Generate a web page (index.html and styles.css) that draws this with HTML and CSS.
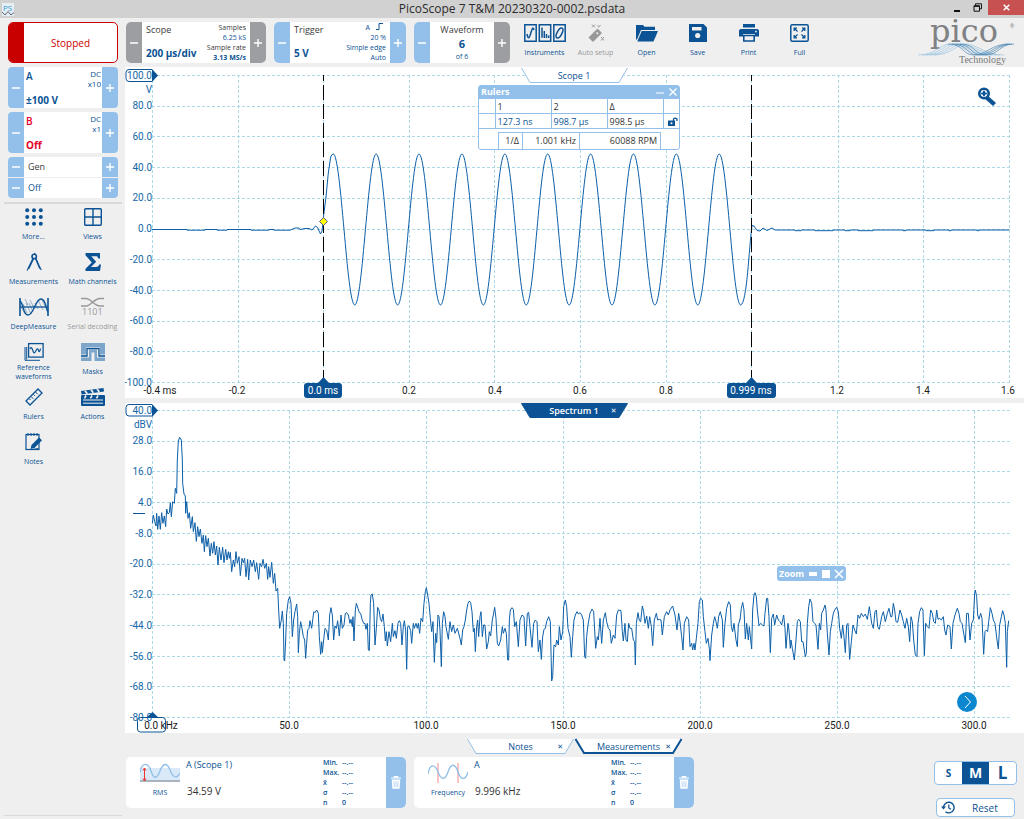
FILE: index.html
```html
<!DOCTYPE html>
<html lang="en">
<head>
<meta charset="utf-8">
<title>PicoScope 7 T&amp;M 20230320-0002.psdata</title>
<meta name="viewport" content="width=device-width, initial-scale=1">
<link rel="stylesheet" href="styles.css">
</head>
<body>
<svg class="defs" aria-hidden="true">
  <symbol id="plus" viewBox="0 0 8 8"><path d="M4 0v8M0 4h8" fill="none" stroke="#fff" stroke-width="1.4"/></symbol>
  <symbol id="minus" viewBox="0 0 8 8"><path d="M0 4h8" fill="none" stroke="#fff" stroke-width="1.4"/></symbol>
  <symbol id="trash" viewBox="0 0 10 13"><path d="M0 2h10M3.3 2V.6h3.4V2" fill="none" stroke="#fff" stroke-width="1.2"/><path d="M.8 3.6h8.4l-.6 9.2H1.4z" fill="#fff"/><path d="M3 5.2l.3 6M5 5.2v6M7 5.2l-.3 6" stroke="#8fbfe9" stroke-width=".6"/></symbol>
</svg>

<header class="titlebar">
  <svg class="app-icon" width="12" height="13" viewBox="0 0 12 13"><rect width="12" height="13" fill="#e6eef4"/><text x="1" y="8" font-size="8" fill="#2f9bd8">PS</text><path d="M0 9l3 3 3-3.500 3 3.500 3-2.500" fill="none" stroke="#567" stroke-width="1"/></svg>
  <h1 class="title">PicoScope 7 T&amp;M 20230320-0002.psdata</h1>
  <div class="window-buttons">
    <button class="win" aria-label="Minimise"><svg width="8" height="8" viewBox="0 0 8 8"><path d="M1 7h6" stroke="#111" stroke-width="2"/></svg></button>
    <button class="win" aria-label="Restore"><svg width="9" height="9" viewBox="0 0 9 9"><path d="M2.500 2V.8h6v5H7M1 2.700h5.500v5.500H1zM1 3.400h5.500" fill="none" stroke="#111"/></svg></button>
    <button class="win win-close" aria-label="Close"><svg width="7" height="7" viewBox="0 0 7 7"><path d="M.7.7l5.600 5.600M6.300.7L.7 6.300" stroke="#fff" stroke-width="1.500"/></svg></button>
  </div>
</header>

<div class="app">
  <aside class="sidebar">
    <button class="run-state"><span class="run-bar"></span><span class="run-text">Stopped</span></button>

    <section class="channel">
      <button class="step" aria-label="Channel A range down"><svg class="sign"><use href="#minus"/></svg></button>
      <div class="channel-body ink">
        <span class="channel-name">A</span><span class="channel-mode">DC<br>x10</span>
        <strong class="channel-range">±100 V</strong>
      </div>
      <button class="step" aria-label="Channel A range up"><svg class="sign"><use href="#plus"/></svg></button>
    </section>
    <section class="channel">
      <button class="step" aria-label="Channel B range down"><svg class="sign"><use href="#minus"/></svg></button>
      <div class="channel-body channel-b">
        <span class="channel-name">B</span><span class="channel-mode">DC<br>x1</span>
        <strong class="channel-range">Off</strong>
      </div>
      <button class="step" aria-label="Channel B range up"><svg class="sign"><use href="#plus"/></svg></button>
    </section>
    <section class="generator">
      <div class="gen-row"><button class="step" aria-label="Generator previous"><svg class="sign"><use href="#minus"/></svg></button><span class="gen-text gray">Gen</span><button class="step" aria-label="Generator next"><svg class="sign"><use href="#plus"/></svg></button></div>
      <div class="gen-row"><button class="step" aria-label="Output down"><svg class="sign"><use href="#minus"/></svg></button><span class="gen-text">Off</span><button class="step" aria-label="Output up"><svg class="sign"><use href="#plus"/></svg></button></div>
    </section>

    <nav class="tools">
      <button class="tool"><svg width="18" height="18" viewBox="0 0 18 18" fill="#0b5394"><circle cx="2.200" cy="2.200" r="2"/><circle cx="9" cy="2.200" r="2"/><circle cx="15.800" cy="2.200" r="2"/><circle cx="2.200" cy="9" r="2"/><circle cx="9" cy="9" r="2"/><circle cx="15.800" cy="9" r="2"/><circle cx="2.200" cy="15.800" r="2"/><circle cx="9" cy="15.800" r="2"/><circle cx="15.800" cy="15.800" r="2"/></svg><span>More...</span></button>
      <button class="tool"><svg width="18" height="18" viewBox="0 0 18 18" fill="none" stroke="#0b5394" stroke-width="1.400"><rect x=".7" y=".7" width="16.600" height="16.600" rx="1"/><path d="M9 1v16M1 9h16"/></svg><span>Views</span></button>
      <button class="tool"><svg width="18" height="18" viewBox="0 0 18 18" fill="none" stroke="#0b5394"><path d="M8.500 5L3.500 15.500M10.500 5L15 15.500" stroke-width="1.800"/><circle cx="9.200" cy="3.500" r="2.200" stroke-width="1.600"/><path d="M4 14l-2 3.500M14.800 14.500l1.500 2.500M9.500 0l.7 1.500" stroke-width="1.200"/></svg><span>Measurements</span></button>
      <button class="tool"><svg width="18" height="18" viewBox="0 0 18 18"><path d="M1.500 0h14.500v5.500h-1.800c-.3-1.700-.9-2.200-2.500-2.200H7.300L12.200 8.700 7 14h5c1.700 0 2.500-.5 3.200-2.400h1.800L16 18H1.500v-2.200L7.800 9.400 1.500 2.200z" fill="#0b5394"/></svg><span>Math channels</span></button>
      <button class="tool"><svg width="30" height="20" viewBox="0 0 30 20" fill="none" stroke="#0b5394"><path d="M1 1v18M29 1v18" stroke-width="1.600"/><path d="M1 10h28" stroke-width="1.300"/><path d="M4 7l4 9M7 6l5 11M10 6l4 9M14 8l2 4M16 6l3 6M19 3l5 10M23 3l4 8M25 3l3 6M2 10l4 7M2 4l3 6M11 3l3 6M6 2l3 6" stroke-width=".5" opacity=".8"/><path d="M1 4c4 4 3 14 8 14 6 0 7-16 13-16 5 0 4 9 7 13" stroke-width="1.300"/></svg><span>DeepMeasure</span></button>
      <button class="tool muted"><svg class="spill" width="24" height="20" viewBox="0 0 24 20" fill="none" stroke="#999"><path d="M0 1.500h5c5 0 8 7.500 14 7.500h4M0 9h5c5 0 8-7.500 14-7.500h4" stroke-width="1.500"/><text x="1" y="18" font-size="9" fill="#999" stroke="none">1101</text></svg><span>Serial decoding</span></button>
      <button class="tool"><svg width="20" height="18" viewBox="0 0 20 18" fill="none" stroke="#0b5394"><rect x="4.600" y=".6" width="14.500" height="13.500" stroke-width="1.300"/><path d="M1 4v13.300h15M2.700 16.500V4" stroke-width="1"/><path d="M6 6c1-3 2-1 3 2s2 2 3-.5 2-2 2.500 0 1.500 1 2-2" stroke-width="1.200"/></svg><span>Reference waveforms</span></button>
      <button class="tool"><svg width="24" height="18" viewBox="0 0 24 18"><path d="M0 0h24v11.500h-5V4.500H5v7H0z" fill="#7ea6cb"/><path d="M0 14.500h8v-8h8v8h8V18H0z" fill="#7ea6cb"/><path d="M0 13h6V5.600h12V13h6" fill="none" stroke="#0b5394" stroke-width="1.300"/><path d="M10.500 18V9.500h3V18z" fill="#efefef"/></svg><span>Masks</span></button>
      <button class="tool"><svg width="18" height="18" viewBox="0 0 18 18" fill="none" stroke="#0b5394" stroke-width="1.300"><path d="M1 13L13 1l4 4L5 17z"/><path d="M4 10.500l1.500 1.500M6 8.500L8.300 10.800M8.300 6.300l1.500 1.500M10.500 4l2.300 2.300" stroke-width="1"/></svg><span>Rulers</span></button>
      <button class="tool"><svg width="24" height="18" viewBox="0 0 24 18"><path d="M0 3L22.500 0l.5 3.600L.5 6.600z" fill="#0b5394"/><rect y="7" width="24" height="11" rx="1" fill="#0b5394"/><path d="M4 2.700l2.300 3M10 1.800l2.300 3M16 1l2.300 3" stroke="#efefef" stroke-width="1.800"/><path d="M2 12h20M2 15.200h20" stroke="#efefef" stroke-width="1"/><path d="M5 7.500l-1.500 2.800M11 7.500l-1.500 2.800M17 7.500l-1.500 2.800" stroke="#efefef" stroke-width="1.600"/></svg><span>Actions</span></button>
      <button class="tool"><svg width="18" height="18" viewBox="0 0 18 18"><rect x="1" y="1.500" width="13" height="15" fill="none" stroke="#0b5394" stroke-width="1.200"/><path d="M3 0v3M6 0v3M9 0v3M12 0v3" stroke="#0b5394" stroke-width="1"/><path d="M5.500 16l1-4 7.500-7.500 3 2.700-7.500 7.800z" fill="#0b5394"/><path d="M7.500 16.500l6-1" stroke="#0b5394"/></svg><span>Notes</span></button>
    </nav>
  </aside>

  <main class="main">
    <div class="toolbar">
      <section class="setting setting-scope">
        <button class="step step-gray" aria-label="Shorter timebase"><svg class="sign"><use href="#minus"/></svg></button>
        <div class="setting-body">
          <div class="setting-left"><span class="gray">Scope</span><strong>200 µs/div</strong></div>
          <div class="setting-right"><span class="gray">Samples</span><span>6.25 kS</span><span class="gray">Sample rate</span><b>3.13 MS/s</b></div>
        </div>
        <button class="step step-gray" aria-label="Longer timebase"><svg class="sign"><use href="#plus"/></svg></button>
      </section>
      <section class="setting setting-trigger">
        <button class="step" aria-label="Trigger level down"><svg class="sign"><use href="#minus"/></svg></button>
        <div class="setting-body">
          <div class="setting-left"><span class="gray">Trigger</span><strong>5 V</strong></div>
          <div class="setting-right"><span class="edge">A <svg width="8" height="7" viewBox="0 0 8 7"><path d="M0 6.500h3v-6h4" fill="none" stroke="#0b5394"/></svg></span><span>20 %</span><span>Simple edge</span><span>Auto</span></div>
        </div>
        <button class="step" aria-label="Trigger level up"><svg class="sign"><use href="#plus"/></svg></button>
      </section>
      <section class="setting setting-wave">
        <button class="step" aria-label="Previous waveform"><svg class="sign"><use href="#minus"/></svg></button>
        <div class="setting-body wave-body"><span class="gray">Waveform</span><strong>6</strong><small>of 6</small></div>
        <button class="step step-gray" aria-label="Next waveform"><svg class="sign"><use href="#plus"/></svg></button>
      </section>
      <nav class="actions">
        <button class="action"><svg width="42" height="18" viewBox="0 0 42 18" fill="none" stroke="#0b5394"><path d="M.8.8h11.400v16.400H.8zM15.300.8h11.400v16.400H15.300zM29.800.8h11.400v16.400H29.800z" stroke-width="1.500"/><path d="M3 10c1 5 2 5 3.500 0s2.500-8 3.500-4M18 3.500v10.300M20.300 7v7M22.500 10v4M24.700 11.500V14" stroke-width="1.500"/><ellipse cx="35.500" cy="9" rx="2.400" ry="5.500" transform="rotate(28 35.500 9)" stroke-width="1.500"/></svg><span>Instruments</span></button>
        <button class="action muted"><svg width="18" height="18" viewBox="0 0 18 18"><path d="M2.500 13.500l8-8 3.500 3.500-8 8z" fill="#999" stroke="#999" stroke-width="1.500" stroke-linejoin="round"/><path d="M9.500 8.500l1.500 1.500" stroke="#efefef" stroke-width="1.600"/><path d="M5 .5l3 3M8 .5l-3 3M14 13l3 3.500M17 13l-3 3.500M13.500 1l-2 2.500M10.500 1l1 1.500" stroke="#999" stroke-width="1"/></svg><span>Auto setup</span></button>
        <button class="action"><svg width="22" height="18" viewBox="0 0 22 18" fill="#0b5394"><path d="M0 1h7l1.500 1.800H19V6H5L1 15.500H0z"/><path d="M5.700 7H22l-4.500 10.500H1.300z"/></svg><span>Open</span></button>
        <button class="action"><svg width="18" height="18" viewBox="0 0 18 18"><path d="M0 0h14.500L18 3.500V18H0z" fill="#0b5394"/><path d="M3 3h9.500v3.500H3z" fill="#efefef"/><circle cx="8.700" cy="11.500" r="2.600" fill="#efefef"/></svg><span>Save</span></button>
        <button class="action"><svg width="20" height="18" viewBox="0 0 20 18" fill="#0b5394"><path d="M4 0h12v3.500H4zM2 5h16c1.500 0 2 1 2 2v5.500h-4V10H4v2.500H0V7c0-1 .5-2 2-2z"/><path d="M4.800 11.500h10.400V17H4.800z" fill="#efefef" stroke="#0b5394" stroke-width="1.600"/><circle cx="17" cy="7.500" r=".9" fill="#efefef"/></svg><span>Print</span></button>
        <button class="action"><svg width="19" height="18" viewBox="0 0 19 18" fill="none" stroke="#0b5394"><rect x=".8" y=".8" width="17.400" height="16.400" rx="1.500" stroke-width="1.500"/><path d="M4.200 7V4.200H7M4.500 4.500l3 3M12 4.200h2.800V7M14.500 4.500l-3 3M4.200 11v2.800H7M4.500 13.500l3-3M14.800 11v2.800H12M14.500 13.500l-3-3" stroke-width="1.300"/></svg><span>Full</span></button>
      </nav>
      <svg class="logo" width="98" height="46" viewBox="0 0 98 46" role="img" aria-label="pico Technology">
        <text x="12" y="20" font-family="DejaVu Serif, serif" font-size="32" fill="#808184">pico</text>
        <g fill="none" stroke="#9cc4e0" stroke-width=".7">
          <path d="M0 33c18 0 22-11 32-11s20 11 38 11M4 33c18 0 22-11 32-11s20 11 38 11M8 33c18 0 22-11 32-11s20 11 38 11M12 33c18 0 22-11 32-11s20 11 38 11M16 33c18 0 22-11 32-11s20 11 38 11"/>
          <path d="M30 22c16 0 14 11 26 11s18-11 34-11M34 22c16 0 14 11 26 11s18-11 32-11M38 22c16 0 14 11 26 11s16-11 30-11M42 22c16 0 14 11 26 11s14-11 28-11" stroke="#4f87b2"/>
        </g>
        <text x="41" y="41" font-family="Liberation Serif, serif" font-size="10" fill="#77787b">Technology</text>
        <text x="92" y="6" font-size="5" fill="#77787b">®</text>
      </svg>
    </div>

    <section class="plot" aria-label="Scope 1">
      <svg class="chart" viewBox="0 0 899 331">
        <g class="grid">
          <path d="M27 8.500H885M27 39.500H885M27 69.500H885M27 100.500H885M27 131.500H885M27 162.500H885M27 192.500H885M27 223.500H885M27 254.500H885M27 284.500H885M27 315.500H885"/>
          <path d="M27.500 8V315M113.500 8V315M198.500 8V315M284.500 8V315M369.500 8V315M455.500 8V315M541.500 8V315M626.500 8V315M713.500 8V315M798.500 8V315M884.500 8V315"/>
        </g>
        <g class="y-labels">
          <text x="27" y="12">100.0</text><text x="27" y="26">V</text><text x="27" y="42">80.0</text><text x="27" y="73">60.0</text><text x="27" y="104">40.0</text><text x="27" y="134">20.0</text><text x="27" y="165">0.0</text><text x="27" y="196">-20.0</text><text x="27" y="227">-40.0</text><text x="27" y="257">-60.0</text><text x="27" y="288">-80.0</text><text x="27" y="319">-100.0</text>
        </g>
        <g class="x-labels">
          <text x="35" y="327">-0.4 ms</text><text x="112" y="327">-0.2</text><text x="284" y="327">0.2</text><text x="370" y="327">0.4</text><text x="455" y="327">0.6</text><text x="541" y="327">0.8</text><text x="712" y="327">1.2</text><text x="798" y="327">1.4</text><text x="883" y="327">1.6</text>
        </g>
        <path class="marker-box" d="M27 2.500H4q-3 0-3 3v6q0 3 3 3H27"/><path class="marker" d="M27 2v13l6-6.500z"/>
        <path class="trace" d="M27 162.500H62v.7h18v-.7h12v.7h10v-.7h24v.7h18v-.7h5v.7h16L170 161h4l1 1.500 5-1h4l3 1.500L190.500 159l2 1.500 3 6.500 1.500-3L198.700 148 201 130 203.300 106 205.700 90Q206.700 87 208.300 87
          c7.800 0 13.600 151 21.440 151c7.800 0 13.600-151 21.440-151c7.800 0 13.600 151 21.440 151c7.800 0 13.600-151 21.440-151c7.800 0 13.600 151 21.440 151c7.800 0 13.600-151 21.440-151c7.800 0 13.600 151 21.440 151c7.800 0 13.600-151 21.440-151c7.800 0 13.600 151 21.440 151c7.800 0 13.600-151 21.440-151c7.800 0 13.600 151 21.440 151c7.800 0 13.600-151 21.440-151c7.800 0 13.600 151 21.440 151c7.800 0 13.600-151 21.440-151c7.800 0 13.600 151 21.440 151c7.800 0 13.600-151 21.440-151c7.800 0 13.600 151 21.440 151c7.800 0 13.600-151 21.440-151c7.800 0 13.600 151 21.440 151
          C622 237 624 180 627 158.500l2 .5 3 4.500 3 .5 3-3 4 2.500 5-2.500 3 2h20v.7h6v-.7h14v.7h18v-.7h12v.7h5v-.7h8v.7h15v-.7h30v.7h3v-.7h20v.7h8v-.7h15v.7h2v-.7h26v.7h2v-.7H884"/>
        <path class="ruler" d="M198.500 8V311M626.500 8V311"/>
        <path d="M198.500 150.500l4 4-4 4-4-4z" fill="#ff0" stroke="#5a5a8c"/>
        <g class="ruler-tag">
          <path d="M193 316l5.500-6 5.500 6h10q3 0 3 3v9q0 3-3 3h-32q-3 0-3-3v-9q0-3 3-3z"/><text x="198" y="327">0.0 ms</text>
          <path d="M621 316l5.500-6 5.500 6h16q3 0 3 3v9q0 3-3 3h-43q-3 0-3-3v-9q0-3 3-3z"/><text x="626" y="327">0.999 ms</text>
        </g>
      </svg>
      <button class="tab tab-over tab-light"><svg class="tab-shape" viewBox="0 0 107 15" preserveAspectRatio="none"><path d="M.5 0L9 14.500h89L106.500 0"/></svg><span class="tab-name">Scope 1</span></button>
      <div class="rulers">
        <div class="rulers-head"><strong>Rulers</strong><button class="mini" aria-label="Minimise rulers"><svg width="8" height="8" viewBox="0 0 8 8"><path d="M0 5h8" stroke="#fff"/></svg></button><button class="mini" aria-label="Close rulers"><svg width="8" height="8" viewBox="0 0 8 8"><path d="M.5.5l7 7M7.500.5l-7 7" stroke="#fff" stroke-width="1.400"/></svg></button></div>
        <table class="rulers-table">
          <tr><td class="slim"></td><th>1</th><th>2</th><th>Δ</th><td class="slim"></td></tr>
          <tr><td></td><td class="ink">127.3 ns</td><td class="ink">998.7 µs</td><td>998.5 µs</td><td class="lock"><svg width="10" height="9" viewBox="0 0 10 9"><rect y="3.500" width="7" height="5.500" fill="#0b5394"/><path d="M5.500 4V2q1.700-1.800 3.500 0v2" fill="none" stroke="#0b5394" stroke-width="1.200"/><circle cx="3.500" cy="6.200" r="1" fill="#fff"/></svg></td></tr>
        </table>
        <table class="rate-table"><tr><th class="inverse">1/Δ</th><td class="rate">1.001 kHz</td><td class="rpm">60088 RPM</td></tr></table>
      </div>
      <button class="zoom-in" aria-label="Zoom in"><svg width="20" height="20" viewBox="0 0 20 20"><path d="M10 8l9 8-3 3-9-8z" fill="#0b5394"/><circle cx="7" cy="6.500" r="4.700" fill="#fff" stroke="#0b5394" stroke-width="2.600"/><path d="M7 3.700v5.600M4.200 6.500h5.600" stroke="#0b5394" stroke-width="1.900"/></svg></button>
    </section>

    <section class="plot" aria-label="Spectrum 1">
      <svg class="chart" viewBox="0 0 899 330">
        <g class="grid">
          <path d="M27 7.500H885M27 38.500H885M27 68.500H885M27 99.500H885M27 130.500H885M27 161.500H885M27 191.500H885M27 222.500H885M27 253.500H885M27 283.500H885M27 314.500H885"/>
          <path d="M27.500 8V315M164.500 8V315M301.500 8V315M438.500 8V315M575.500 8V315M712.500 8V315M849.500 8V315"/>
        </g>
        <g class="y-labels">
          <text x="27" y="11">40.0</text><text x="27" y="25">dBV</text><text x="27" y="41">28.0</text><text x="27" y="72">16.0</text><text x="27" y="103">4.0</text><text x="27" y="134">-8.0</text><text x="27" y="164">-20.0</text><text x="27" y="195">-32.0</text><text x="27" y="226">-44.0</text><text x="27" y="257">-56.0</text><text x="27" y="287">-68.0</text><text x="27" y="318">-80.0</text>
        </g>
        <g class="x-labels">
          <text x="36" y="326">0.0 kHz</text><text x="164" y="326">50.0</text><text x="301" y="326">100.0</text><text x="438" y="326">150.0</text><text x="575" y="326">200.0</text><text x="712" y="326">250.0</text><text x="849" y="326">300.0</text>
        </g>
        <path class="marker-box" d="M27 1.500H4q-3 0-3 3v5.500q0 3 3 3H27M15.500 314.500h22q3 0 3 3v8.500q0 3-3 3h-22q-3 0-3-3v-8.500q0-3 3-3zM8 110.500h12"/><path class="marker" d="M27 1v13l6-6.500zM21 315h13l-6.500-6z"/>
        <g transform="translate(-5 157) scale(.33333)">
          <polyline class="trace" points="97,-110 100,-135 104,-115 108,-102 110,-140 113,-92 117,-132 121,-92 125,-142 129,-110 133,-132 137,-100 140,-153 144,-138 148,-142 151,-172 154,-130 158,-175 163,-170 166,-215 170,-200 172,-300 175,-357 179,-368 184,-360 187,-300 188,-230 192,-198 196,-192 197,-140 200,-175 204,-125 208,-142 212,-95 217,-130 220,-85 225,-112 229,-56 233,-100 237,-70 241,-93 246,-50 250,-75 253,-25 257,-73 261,-40 265,-65 270,-12 274,-50 278,-20 282,-55 286,-15 290,-42 294,15 298,-38 303,0 308,-38 312,8 317,-32 321,0 325,-25 328,-5 331,-23 335,35 340,0 344,20 348,-25 352,10 357,-10 361,47 366,-5 370,8 374,-5 378,50 383,-2 386,60 391,0 396,20 401,0 406,35 410,8 416,58 420,10 425,20 429,-2 434,25 439,10 443,58 446,20 450,52 455,7 460,70 464,40 468,93 473,85 476,150 479,205 484,180 487,153 490,190 492,300 494,303 497,240 500,160 505,120 509,110 513,130 517,230 521,180 525,155 530,132 533,170 535,278 538,220 542,185 546,205 550,230 554,240 557,295 560,250 563,210 567,205 570,182 575,205 580,165 582,155 585,158 590,150 595,160 598,230 602,283 605,245 607,278 611,240 615,205 620,210 625,240 629,165 633,143 637,165 641,240 645,198 649,205 653,182 658,228 663,165 667,205 672,195 676,160 680,158 685,165 690,190 693,178 697,200 699,170 702,243 706,150 709,130 714,145 718,158 722,160 726,178 731,190 735,190 738,208 742,190 745,270 748,272 751,130 753,105 757,102 761,130 765,255 769,205 773,142 777,150 781,175 785,185 789,162 793,200 796,243 799,215 802,258 807,215 812,245 817,190 820,230 825,212 829,235 834,190 838,182 842,190 846,255 850,200 853,182 857,210 860,328 863,200 867,198 872,212 875,250 880,190 883,205 888,190 892,205 895,190 899,220 903,175 908,185 912,130 916,95 919,83 923,105 927,130 931,175 935,215 939,185 943,307 947,220 950,248 954,165 957,170 960,210 964,320 967,190 971,155 975,170 978,200 985,238 990,185 995,215 1000,195 1005,220 1012,205 1020,235"/>
        </g>
        <g transform="translate(315 157) scale(.33333)">
          <polyline class="trace" points="60,235 64,255 68,210 72,200 76,180 80,150 84,130 88,123 92,128 96,155 100,215 103,205 106,275 110,200 113,180 116,230 120,170 123,155 127,230 131,195 135,195 140,267 145,245 148,215 152,228 157,180 160,165 164,142 168,175 172,250 176,258 182,240 187,200 190,220 195,205 199,220 203,300 206,300 208,180 211,150 216,143 220,148 224,200 229,185 235,260 240,180 246,165 252,170 257,258 262,160 266,157 270,200 276,262 281,190 286,180 291,185 295,275 300,240 304,298 308,230 312,208 316,205 320,185 326,170 331,185 335,363 338,350 342,255 347,260 350,240 355,255 358,200 363,240 368,215 371,140 376,120 380,140 384,205 390,230 394,292 398,230 402,180 406,165 411,155 415,162 420,158 425,165 430,180 434,290 437,295 440,230 444,195 450,160 456,147 461,155 464,210 467,265 472,230 475,240 480,175 485,250 490,180 496,158 500,185 505,205 510,210 514,250 520,225 525,235 530,165 535,150 543,152 547,215 550,243 555,190 558,240 562,245 566,190 570,205 575,205 580,240 584,245 586,315 589,190 594,158 598,182 602,185 607,138 611,155 615,190 620,168 625,205 629,170 634,200 638,257 643,180 649,160 653,180 658,178 663,180 667,225 673,170 680,155 685,165 690,150 698,138 705,165 711,210 716,160 720,185 725,230 729,270 733,190 740,170 746,180 750,260 755,250 758,270 762,250 765,270 769,235 774,190 778,125 782,115 787,120 790,170 795,215 799,250 804,235 808,265 810,302 815,225 820,190 824,170 828,185 832,205 836,170 841,155 847,180 850,262 855,190 860,145 866,125 871,135 874,200 878,215 882,190 888,240 892,260 895,195 900,178"/>
        </g>
        <g transform="translate(605 157) scale(.33333)">
          <polyline class="trace" points="30,180 34,145 38,127 42,150 46,237 50,190 55,240 58,200 62,240 65,267 68,150 72,105 75,98 79,110 82,150 87,197 92,190 97,195 102,198 105,160 110,115 113,115 117,170 121,278 125,175 130,162 134,195 140,165 145,180 150,185 155,195 161,165 165,205 168,265 174,190 177,210 181,265 183,240 187,265 193,300 198,240 202,185 206,178 211,185 215,245 219,245 226,290 229,280 232,190 236,140 240,117 245,130 249,185 254,190 258,195 264,268 268,190 272,210 275,160 280,150 285,135 288,150 292,220 297,285 301,215 305,190 310,160 314,150 320,142 325,155 329,205 334,235 338,195 342,230 346,278 350,195 354,190 359,298 364,245 369,195 374,210 379,222 384,165 389,175 394,160 400,170 406,162 412,178 418,140 421,160 425,190 430,205 435,155 439,150 443,200 448,208 455,170 460,155 466,185 472,160 477,145 482,170 486,170 490,130 494,150 498,185 503,187 510,150 515,165 520,185 525,205 530,175 535,200 539,245 543,170 547,185 551,240 556,285 561,290 564,190 569,155 574,143 579,150 583,287 587,190 592,200 597,205 602,150 607,160 611,185 616,190 620,150 624,178 629,175 634,180 640,170 644,210 648,225 653,195 660,200 664,267 669,190 675,165 682,145 687,160 691,185 696,190 702,225 706,248 710,160 715,160 720,240 725,190 730,180 734,100 736,90 740,110 743,165 747,178 752,160 756,175 761,283 765,215 769,210 773,215 776,185 781,143 786,160 790,180 795,190 801,240 805,267 809,195 814,170 818,152 822,165 826,190 830,322 832,215 836,182"/>
        </g>
      </svg>
      <button class="tab tab-over tab-solid"><svg class="tab-shape" viewBox="0 0 107 15" preserveAspectRatio="none"><path d="M.5.5L9 14.500h89L106.500.5z"/></svg><span class="tab-name">Spectrum 1</span><span class="tab-x">✕</span></button>
      <div class="zoom-bar"><strong>Zoom</strong><svg width="38" height="10" viewBox="0 0 38 10"><path d="M1 3h8v4H1zM14 1h8v8h-8z" fill="#fff"/><path d="M27 1l8 8M35 1l-8 8" stroke="#fff" stroke-width="1.600"/></svg></div>
      <button class="next" aria-label="Next"><svg width="20" height="20" viewBox="0 0 20 20"><circle cx="10" cy="10" r="10" fill="#0b87d0"/><path d="M8 4l5.500 6L8 16" fill="none" stroke="#fff"/></svg></button>
    </section>

    <div class="dock">
      <div class="dock-tabs">
        <button class="tab tab-light"><svg class="tab-shape" viewBox="0 0 107 15" preserveAspectRatio="none"><path d="M.5 0L9 14.500h89L106.500 0"/></svg><span class="tab-name">Notes</span><span class="tab-x">✕</span></button>
        <button class="tab tab-active"><svg class="tab-shape" viewBox="0 0 107 15" preserveAspectRatio="none"><path d="M.5 0L9 14h89L106.500 0"/></svg><span class="tab-name">Measurements</span><span class="tab-x">✕</span></button>
      </div>
      <div class="dock-body">
        <article class="card">
          <div class="card-kind"><svg width="40" height="20" viewBox="0 0 40 20"><path d="M0 5h40v12H0z" fill="#d9e9f8"/><path d="M0 18h40" stroke="#aab4be" stroke-width="2"/><path d="M0 9C2-1 8-1 11 8s6 8 9 0 7-9 10-1 7 9 10 3" fill="none" stroke="#8fbfe9" stroke-width="1.300"/><path d="M4.500 6v11M3 7.500L4.500 5 6 7.500M3 15.500L4.500 18 6 15.500" fill="none" stroke="#e33"/></svg><span>RMS</span></div>
          <div class="card-main"><span>A (Scope 1)</span><span class="value">34.59 V</span></div>
          <dl class="stats"><dt>Min.</dt><dd>--.--</dd><dt>Max.</dt><dd>--.--</dd><dt>x̄</dt><dd>--.--</dd><dt>σ</dt><dd>--.--</dd><dt>n</dt><dd>0</dd></dl>
          <button class="bin" aria-label="Delete RMS"><svg width="10" height="13"><use href="#trash"/></svg></button>
        </article>
        <article class="card">
          <div class="card-kind"><svg width="40" height="20" viewBox="0 0 40 20"><path d="M10 0v20M30 0v20" stroke="#f8c4c4" stroke-width="2"/><path d="M0 11C2 0 7 1 10 9s7 9 10 0 7-9 10 0 8 8 10 0" fill="none" stroke="#8fbfe9" stroke-width="1.300"/></svg><span>Frequency</span></div>
          <div class="card-main"><span>A</span><span class="value">9.996 kHz</span></div>
          <dl class="stats"><dt>Min.</dt><dd>--.--</dd><dt>Max.</dt><dd>--.--</dd><dt>x̄</dt><dd>--.--</dd><dt>σ</dt><dd>--.--</dd><dt>n</dt><dd>0</dd></dl>
          <button class="bin" aria-label="Delete frequency"><svg width="10" height="13"><use href="#trash"/></svg></button>
        </article>
        <div class="dock-side">
          <div class="sizes"><button class="size size-s">S</button><button class="size size-m" aria-pressed="true">M</button><button class="size size-l">L</button></div>
          <button class="reset"><svg width="14" height="13" viewBox="0 0 14 13" fill="none" stroke="#0b5394"><path d="M2.500 7A5.300 5.300 0 1 1 4.500 10.700" stroke-width="1.400"/><path d="M0 5.500h5L2.500 8.500z" fill="#0b5394" stroke="none"/><path d="M7.800 3.500V7l2.200 1.300" stroke-width="1.200"/></svg><span>Reset</span></button>
        </div>
      </div>
    </div>
  </main>
</div>
</body>
</html>
```
FILE: styles.css
```css
* { box-sizing: border-box; }
body {
  margin: 0;
  min-height: 100vh;
  display: flex;
  flex-direction: column;
  background: #efefef;
  color: #0b5394;
  font: 500 10px/14px "Open Sans", "Noto Sans", sans-serif;
}
button { padding: 0; border: 0; background: none; color: inherit; font: inherit; cursor: pointer; }
svg { display: block; flex: none; }
strong, b { font-weight: 700; }
.defs { position: absolute; width: 0; height: 0; }
.gray { color: #3c3c3c; }
.ink { color: #0b5394; }
.muted { color: #999; }

.titlebar { display: grid; grid-template-columns: 1fr auto 1fr; align-items: center; height: 18px; background: #d1d1d1; }
.app-icon { margin-left: 2px; }
.title { margin: 0; font-size: 12px; line-height: 18px; font-weight: 400; color: #2b2b2b; }
.window-buttons { justify-self: end; display: flex; height: 15px; align-self: start; }
.win { width: 21px; display: grid; place-items: center; }
.win-close { width: 36px; background: #c75050; }

.app { flex: 1; display: grid; grid-template-columns: 125px minmax(0, 1fr); }

.sidebar { display: flex; flex-direction: column; gap: 4px; padding: 4px 7px 4px 8px; }
.run-state { display: flex; height: 41px; overflow: hidden; border: 1px solid #c90000; border-radius: 5px; background: #fff; color: #c00; }
.run-bar { width: 15px; align-self: stretch; background: #c90000; }
.run-text { flex: 1; align-self: center; }
.channel { display: flex; height: 41px; border-radius: 4px; overflow: hidden; background: #fff; }
.step { flex: none; width: 16px; display: grid; place-items: center; background: #92c0ea; }
.step-gray { background: #9d9ea2; }
.sign { width: 8px; height: 8px; }
.channel-body { flex: 1; display: grid; grid-template-columns: 1fr auto; align-content: space-between; padding: 2px 1px 1px 2px; }
.channel-b { color: #e2002a; }
.channel-mode { font-size: 8px; line-height: 10px; text-align: right; color: #0b5394; }
.channel-name { font-weight: 600; }
.channel-range { grid-column: 1 / -1; font-size: 10px; line-height: 13px; }
.generator { display: grid; gap: 1px; height: 41px; border-radius: 4px; overflow: hidden; }
.gen-row { display: flex; background: #fff; }
.gen-text { flex: 1; padding: 3px 4px; font-size: 9px; line-height: 14px; }

.tools { flex: 1; display: grid; grid-template-columns: 1fr 1fr; grid-auto-rows: 45px; margin: 0 -4px; padding-top: 2px; border-top: 2px solid #d9d9d9; border-bottom: 1px solid #d9d9d9; }
.tool { display: flex; flex-direction: column; align-items: center; justify-content: flex-start; padding-top: 1px; font-size: 7px; line-height: 9px; }
.tool svg { height: 20px; }
.tool .spill { overflow: visible; }
.tool span { min-height: 19px; max-width: 52px; display: grid; place-items: center; }

.main { display: flex; flex-direction: column; min-width: 0; }
.toolbar { display: flex; align-items: flex-start; gap: 8px; height: 49px; padding: 4px 8px 0 1px; }
.setting { display: flex; height: 41px; border-radius: 5px; overflow: hidden; background: #fff; }
.setting-scope { width: 140px; }
.setting-trigger { width: 132px; }
.setting-wave { width: 96px; }
.setting-body { flex: 1; min-width: 0; display: flex; justify-content: space-between; padding: 1px 4px; white-space: nowrap; }
.setting-left { display: flex; flex-direction: column; justify-content: space-between; padding-bottom: 2px; font-size: 10px; }
.setting-left .gray { font-size: 9px; }
.setting-right { display: flex; flex-direction: column; align-items: flex-end; font-size: 7px; line-height: 10px; }
.edge { display: flex; gap: 6px; padding-right: 2px; }
.wave-body { flex-direction: column; align-items: center; font-size: 9px; line-height: 14px; }
.wave-body strong { font-size: 11px; }
.wave-body small { font-size: 7px; line-height: 11px; }
.actions { display: flex; margin-left: 1px; }
.action { width: 51px; padding-top: 2px; display: flex; flex-direction: column; align-items: center; gap: 6px; font-size: 7px; line-height: 9px; }
.action svg { height: 18px; }
.logo { margin-left: auto; overflow: visible; }

.plot { position: relative; background: #fff; margin-bottom: 5px; }
.plot + .plot { margin-bottom: 0; }
.chart { width: 100%; height: auto; font: 10px Roboto, sans-serif; }
.grid { fill: none; stroke: #add8e6; stroke-dasharray: 3 2; shape-rendering: crispEdges; }
.y-labels { fill: #1668a8; text-anchor: end; }
.x-labels { fill: #1a1a1a; text-anchor: middle; }
.trace { fill: none; stroke: #0c5fa8; stroke-width: 1; stroke-linejoin: round; vector-effect: non-scaling-stroke; }
.marker-box { fill: none; stroke: #0b5394; }
.marker { fill: #0b5394; }
.ruler { stroke: #000; stroke-dasharray: 15 4; stroke-dashoffset: 9; shape-rendering: crispEdges; }
.ruler-tag { fill: #0b5394; text-anchor: middle; }
.ruler-tag text { fill: #fff; }

.tab { position: relative; display: grid; grid-template-columns: 1fr auto 1fr; align-items: center; width: 107px; height: 15px; padding: 1px 0 0; font-size: 9px; line-height: 12px; }
.tab-name { position: relative; grid-column: 2; }
.tab-shape { position: absolute; inset: 0; width: 100%; height: 100%; overflow: visible; fill: #fff; stroke: #92c0ea; }
.tab-x { position: relative; justify-self: end; margin-right: 11px; font: bold 7px/12px "DejaVu Sans", sans-serif; }
.tab-over { position: absolute; top: 1px; left: calc(50% - 54px); }
.plot + .plot .tab-over { top: 0; }
.tab-solid { color: #fff; font-weight: 600; }
.tab-solid .tab-shape { fill: #0b5394; stroke: #0b5394; }
.tab-active .tab-shape { stroke: #0b5394; stroke-width: 2; }

.rulers { position: absolute; top: 18px; left: 353px; width: 202px; border: 1px solid #92c0ea; border-radius: 3px; background: #fff; color: #333; font-size: 9px; line-height: 15px; }
.rulers-head { display: flex; gap: 5px; height: 12px; padding: 0 2px; align-items: center; background: #92c0ea; color: #fff; }
.rulers-head strong { flex: 1; line-height: 12px; }
.rulers-table { width: 100%; border-collapse: collapse; table-layout: fixed; }
.rulers-table td, .rulers-table th { height: 15px; padding: 0 2px; border: 1px solid #92c0ea; font-weight: 500; text-align: left; line-height: 13px; }
.rulers-table tr > :first-child { border-left: 0; }
.rulers-table tr > :last-child { border-right: 0; }
.rulers-table .slim { width: 16px; }
.lock svg { margin-left: 2px; }
.rulers .ink { color: #0b5394; }
.rate-table { width: 163px; margin: 3px 0 0 19px; border-collapse: collapse; table-layout: fixed; }
.rate-table td, .rate-table th { height: 16px; padding: 0 3px; border: 1px solid #92c0ea; border-bottom: 0; font-weight: 500; text-align: right; line-height: 13px; }
.rate-table .inverse { width: 24px; }
.rate-table .rate { width: 57px; }
.zoom-in { position: absolute; top: 20px; right: 27px; }
.zoom-bar { position: absolute; top: 163px; right: 178px; display: flex; align-items: center; justify-content: space-between; width: 69px; height: 15px; padding-left: 2px; border-radius: 3px; background: #92c0ea; color: #fff; font-size: 9px; }
.next { position: absolute; right: 47px; bottom: 21px; }

.dock { display: flex; flex-direction: column; gap: 3px; padding: 6px 7px 3px 1px; }
.dock-tabs { display: flex; justify-content: center; gap: 1px; padding-left: 6px; }
.dock-body { display: flex; gap: 8px; align-items: flex-start; }
.card { display: flex; width: 280px; height: 51px; border-radius: 5px; overflow: hidden; background: #fff; }
.card-kind { width: 60px; padding: 6px 0 0 8px; display: flex; flex-direction: column; align-items: center; gap: 5px; font-size: 7px; line-height: 10px; }
.card-main { flex: 1; display: flex; flex-direction: column; gap: 12px; padding-top: 1px; font-size: 9px; }
.value { padding-left: 1px; font-size: 10px; color: #333; }
.stats { display: grid; grid-template-columns: 19px 44px; grid-auto-rows: 10px; margin: 0; padding-top: 1px; font-size: 7px; line-height: 10px; font-weight: 600; }
.stats dd { margin: 0; }
.bin { width: 20px; display: grid; place-items: center; background: #92c0ea; }
.dock-side { margin-left: auto; padding-top: 4px; display: flex; flex-direction: column; align-items: flex-end; gap: 13px; }
.sizes { display: grid; grid-template-columns: repeat(3, 27px); height: 24px; border: 1px solid #92c0ea; border-radius: 4px; overflow: hidden; background: #fff; }
.size { font-weight: 700; }
.size-m { background: #0b5394; color: #fff; font-size: 14px; }
.size-l { font-size: 17px; }
.reset { display: flex; align-items: center; gap: 17px; width: 79px; height: 19px; margin-right: 2px; padding-left: 4px; border: 1px solid #92c0ea; border-radius: 4px; background: #fff; }
```
